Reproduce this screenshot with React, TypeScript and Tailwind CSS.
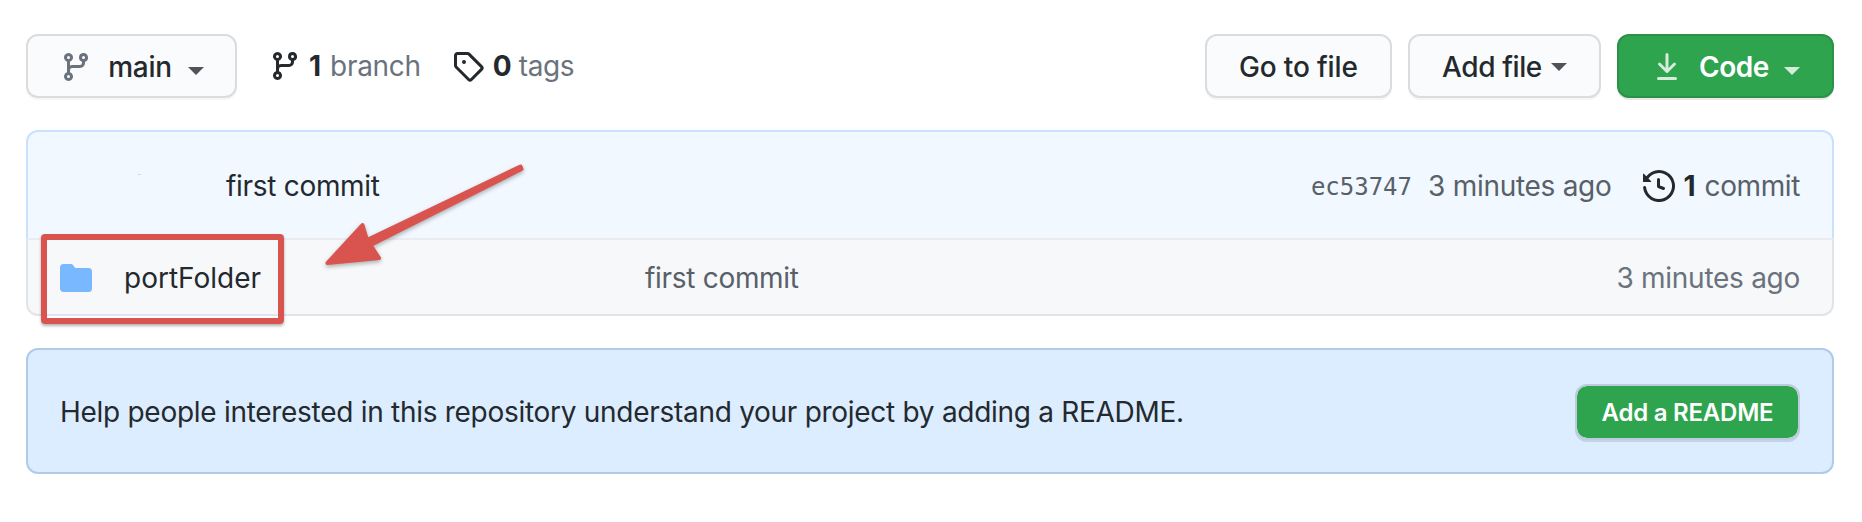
import type { ReactNode } from "react";

function Octicon({ d, className }: { d: string; className: string }) {
  return (
    <svg viewBox="0 0 16 16" width="32" height="32" fill="currentColor" className={`shrink-0 ${className}`} aria-hidden="true">
      <path fillRule="evenodd" d={d} />
    </svg>
  );
}

const BRANCH =
  "M11.75 2.5a.75.75 0 100 1.5.75.75 0 000-1.5zm-2.25.75a2.25 2.25 0 113 2.122V6A2.5 2.5 0 0110 8.5H6a1 1 0 00-1 1v1.128a2.251 2.251 0 11-1.5 0V5.372a2.25 2.25 0 111.5 0v1.836A2.492 2.492 0 016 7h4a1 1 0 001-1v-.628A2.25 2.25 0 019.5 3.25zM4.25 12a.75.75 0 100 1.5.75.75 0 000-1.5zM3.5 3.25a.75.75 0 111.5 0 .75.75 0 01-1.5 0z";
const TAG =
  "M2.5 7.775V2.75a.25.25 0 01.25-.25h5.025a.25.25 0 01.177.073l6.25 6.25a.25.25 0 010 .354l-5.025 5.025a.25.25 0 01-.354 0l-6.25-6.25a.25.25 0 01-.073-.177zm-1.5 0V2.75C1 1.784 1.784 1 2.75 1h5.025c.464 0 .91.184 1.238.513l6.25 6.25a1.75 1.75 0 010 2.474l-5.026 5.026a1.75 1.75 0 01-2.474 0l-6.25-6.25A1.75 1.75 0 011 7.775zM6 5a1 1 0 100 2 1 1 0 000-2z";
const DOWNLOAD =
  "M7.47 10.78a.75.75 0 001.06 0l3.75-3.75a.75.75 0 00-1.06-1.06L8.75 8.44V1.75a.75.75 0 00-1.5 0v6.69L4.78 5.97a.75.75 0 00-1.06 1.06l3.75 3.75zM3.75 13a.75.75 0 000 1.5h8.5a.75.75 0 000-1.5h-8.5z";
const HISTORY =
  "M1.643 3.143L.427 1.927A.25.25 0 000 2.104V5.75c0 .138.112.25.25.25h3.646a.25.25 0 00.177-.427L2.715 4.215a6.5 6.5 0 11-1.18 4.458.75.75 0 10-1.493.154 8.001 8.001 0 101.6-5.684zM7.75 4a.75.75 0 01.75.75v2.992l2.028.812a.75.75 0 01-.557 1.392l-2.5-1A.75.75 0 017 8.25v-3.5A.75.75 0 017.75 4z";
const FOLDER =
  "M1.75 1A1.75 1.75 0 000 2.75v10.5C0 14.216.784 15 1.75 15h12.5A1.75 1.75 0 0016 13.25v-8.5A1.75 1.75 0 0014.25 3h-6.5a.25.25 0 01-.2-.1l-.9-1.2c-.33-.44-.85-.7-1.4-.7h-3.5z";

function Caret({ className }: { className: string }) {
  return <span className={`h-0 w-0 shrink-0 border-x-8 border-t-8 border-x-transparent ${className}`} />;
}

function Button({ className, children }: { className: string; children: ReactNode }) {
  return (
    <button
      className={`flex h-16 shrink-0 items-center rounded-xl border-2 border-[#dadcdd] bg-[#fafbfc] pt-px font-[550] shadow-[0_2px_0_rgba(27,31,35,0.04)] ${className}`}
    >
      {children}
    </button>
  );
}

function Arrow() {
  return (
    <svg
      viewBox="0 0 220 130"
      width="220"
      height="130"
      className="pointer-events-none absolute top-[150px] left-[315px] drop-shadow-[0_2px_2px_rgba(0,0,0,0.3)]"
      aria-hidden="true"
    >
      <path
        d="M12.500 113L47.500 75L52 90L205.500 16.500L206.500 19L55.500 95L64 108Z"
        fill="#d9534f"
        stroke="#d9534f"
        strokeWidth="4"
        strokeLinejoin="round"
      />
    </svg>
  );
}

export default function App() {
  return (
    <main className="relative h-[522px] w-[1862px] overflow-hidden bg-white px-[26px] pr-7 pt-[34px] font-['Inter',sans-serif] text-[28px] leading-[34px] whitespace-nowrap text-[#24292e]">
      <header className="flex h-16 items-center">
        <Button className="w-[211px] pl-8">
          <Octicon d={BRANCH} className="text-[#6a737d]" />
          <span className="ml-4 w-[64px] tracking-[-0.3px]">main</span>
          <Caret className="mt-2 ml-4 border-t-[#505357]" />
        </Button>
        <Octicon d={BRANCH} className="ml-8" />
        <span className="ml-2 font-bold">1</span>
        <span className="ml-[9px] tracking-[-0.29px] text-[#6a737d]">branch</span>
        <Octicon d={TAG} className="ml-[31px]" />
        <span className="ml-[9px] w-[18px] font-bold">0</span>
        <span className="ml-2 tracking-[-0.4px] text-[#6a737d]">tags</span>
        <Button className="ml-auto w-[187px] pl-8 tracking-[-0.15px]">Go to file</Button>
        <Button className="ml-4 w-[193px] pl-8">
          <span className="w-[100px] tracking-[-0.4px]">Add file</span>
          <Caret className="ml-[9px] border-t-[#505357]" />
        </Button>
        <button className="ml-4 flex h-16 w-[217px] items-center rounded-xl border-2 border-[#2a9147] bg-[#2ea44f] pt-px pl-8 font-semibold tracking-[-0.5px] text-white shadow-[0_2px_0_rgba(27,31,35,0.1)]">
          <Octicon d={DOWNLOAD} className="text-[#d5edda]" />
          <span className="ml-4 w-[69px]">Code</span>
          <Caret className="mt-2 ml-4 border-t-[#d5edda]" />
        </button>
      </header>

      <section className="mt-8">
        <div className="flex h-[108px] items-center rounded-t-xl border-2 border-b-0 border-[#c8e1ff] bg-[#f1f8ff] pt-0.5 pr-8 pl-[198px]">
          <span className="tracking-[-0.3px]">first commit</span>
          <span className="ml-auto pt-0.5 font-['DejaVu_Sans_Mono',monospace] text-2xl text-[#586069]">ec53747</span>
          <span className="ml-4 tracking-[-0.28px] text-[#586069]">3 minutes ago</span>
          <Octicon d={HISTORY} className="ml-[31px]" />
          <span className="ml-[9px] font-bold">1</span>
          <span className="ml-[9px] tracking-[-0.4px] text-[#586069]">commit</span>
        </div>
        <div className="flex h-[78px] items-center rounded-b-xl border-2 border-[#e1e4e8] border-t-[#eaecef] bg-[#f6f8fa] pt-0.5 pr-8 pl-8">
          <Octicon d={FOLDER} className="text-[#79b8ff]" />
          <span className="ml-8 w-[521px]">portFolder</span>
          <span className="tracking-[-0.3px] text-[#586069]">first commit</span>
          <span className="ml-auto tracking-[-0.28px] text-[#6a737d]">3 minutes ago</span>
        </div>
      </section>

      <section className="mt-8 flex h-[126px] items-center justify-between rounded-xl border-2 border-[#afcbe9] bg-[#dbedff] pr-8 pl-8">
        <p className="pt-px tracking-[-0.285px]">
          Help people interested in this repository understand your project by adding a README.
        </p>
        <button className="mt-0.5 h-14 w-[225px] rounded-xl border-2 border-[#bccbdd] bg-[#2ea44f] bg-clip-padding pt-px text-2xl font-semibold tracking-[-0.23px] text-white shadow-[0_2px_0_#c3d3e6]">
          Add a README
        </button>
      </section>

      <div className="pointer-events-none absolute top-[174px] left-[138px] h-px w-[3px] bg-[#d3dbe3]" />
      <div className="pointer-events-none absolute top-[234px] left-[41px] h-[90px] w-[243px] rounded-[4px] border-6 border-[#d9534f] shadow-[0_2px_3px_rgba(0,0,0,0.3)]" />
      <Arrow />
    </main>
  );
}
